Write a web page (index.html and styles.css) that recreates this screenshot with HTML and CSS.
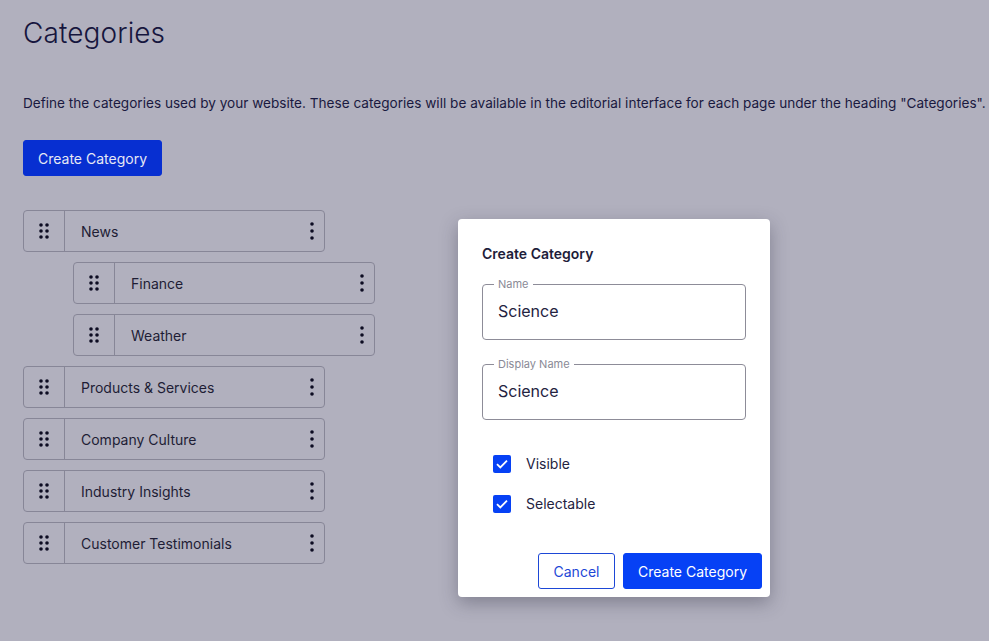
FILE: index.html
```html
<!DOCTYPE html>
<html lang="en">
<head>
<meta charset="utf-8">
<title>Categories</title>
<link rel="stylesheet" href="styles.css">
</head>
<body>
<main class="page">
  <h1 class="title">Categories</h1>
  <p class="intro">Define the categories used by your website. These categories will be available in the editorial interface for each page under the heading "Categories".</p>
  <button class="btn btn-primary btn-dim">Create Category</button>

  <ul class="tree">
    <li class="row"><span class="handle"><svg width="10" height="16" viewBox="0 0 10 16"><circle cx="2" cy="2" r="1.8"/><circle cx="8" cy="2" r="1.8"/><circle cx="2" cy="8" r="1.8"/><circle cx="8" cy="8" r="1.8"/><circle cx="2" cy="14" r="1.8"/><circle cx="8" cy="14" r="1.8"/></svg></span><span class="label">News</span><span class="more"><svg width="4" height="18" viewBox="0 0 4 18"><circle cx="2" cy="2" r="1.8"/><circle cx="2" cy="9" r="1.8"/><circle cx="2" cy="16" r="1.8"/></svg></span></li>
    <li class="row child"><span class="handle"><svg width="10" height="16" viewBox="0 0 10 16"><circle cx="2" cy="2" r="1.8"/><circle cx="8" cy="2" r="1.8"/><circle cx="2" cy="8" r="1.8"/><circle cx="8" cy="8" r="1.8"/><circle cx="2" cy="14" r="1.8"/><circle cx="8" cy="14" r="1.8"/></svg></span><span class="label">Finance</span><span class="more"><svg width="4" height="18" viewBox="0 0 4 18"><circle cx="2" cy="2" r="1.8"/><circle cx="2" cy="9" r="1.8"/><circle cx="2" cy="16" r="1.8"/></svg></span></li>
    <li class="row child"><span class="handle"><svg width="10" height="16" viewBox="0 0 10 16"><circle cx="2" cy="2" r="1.8"/><circle cx="8" cy="2" r="1.8"/><circle cx="2" cy="8" r="1.8"/><circle cx="8" cy="8" r="1.8"/><circle cx="2" cy="14" r="1.8"/><circle cx="8" cy="14" r="1.8"/></svg></span><span class="label">Weather</span><span class="more"><svg width="4" height="18" viewBox="0 0 4 18"><circle cx="2" cy="2" r="1.8"/><circle cx="2" cy="9" r="1.8"/><circle cx="2" cy="16" r="1.8"/></svg></span></li>
    <li class="row"><span class="handle"><svg width="10" height="16" viewBox="0 0 10 16"><circle cx="2" cy="2" r="1.8"/><circle cx="8" cy="2" r="1.8"/><circle cx="2" cy="8" r="1.8"/><circle cx="8" cy="8" r="1.8"/><circle cx="2" cy="14" r="1.8"/><circle cx="8" cy="14" r="1.8"/></svg></span><span class="label">Products &amp; Services</span><span class="more"><svg width="4" height="18" viewBox="0 0 4 18"><circle cx="2" cy="2" r="1.8"/><circle cx="2" cy="9" r="1.8"/><circle cx="2" cy="16" r="1.8"/></svg></span></li>
    <li class="row"><span class="handle"><svg width="10" height="16" viewBox="0 0 10 16"><circle cx="2" cy="2" r="1.8"/><circle cx="8" cy="2" r="1.8"/><circle cx="2" cy="8" r="1.8"/><circle cx="8" cy="8" r="1.8"/><circle cx="2" cy="14" r="1.8"/><circle cx="8" cy="14" r="1.8"/></svg></span><span class="label">Company Culture</span><span class="more"><svg width="4" height="18" viewBox="0 0 4 18"><circle cx="2" cy="2" r="1.8"/><circle cx="2" cy="9" r="1.8"/><circle cx="2" cy="16" r="1.8"/></svg></span></li>
    <li class="row"><span class="handle"><svg width="10" height="16" viewBox="0 0 10 16"><circle cx="2" cy="2" r="1.8"/><circle cx="8" cy="2" r="1.8"/><circle cx="2" cy="8" r="1.8"/><circle cx="8" cy="8" r="1.8"/><circle cx="2" cy="14" r="1.8"/><circle cx="8" cy="14" r="1.8"/></svg></span><span class="label">Industry Insights</span><span class="more"><svg width="4" height="18" viewBox="0 0 4 18"><circle cx="2" cy="2" r="1.8"/><circle cx="2" cy="9" r="1.8"/><circle cx="2" cy="16" r="1.8"/></svg></span></li>
    <li class="row"><span class="handle"><svg width="10" height="16" viewBox="0 0 10 16"><circle cx="2" cy="2" r="1.8"/><circle cx="8" cy="2" r="1.8"/><circle cx="2" cy="8" r="1.8"/><circle cx="8" cy="8" r="1.8"/><circle cx="2" cy="14" r="1.8"/><circle cx="8" cy="14" r="1.8"/></svg></span><span class="label">Customer Testimonials</span><span class="more"><svg width="4" height="18" viewBox="0 0 4 18"><circle cx="2" cy="2" r="1.8"/><circle cx="2" cy="9" r="1.8"/><circle cx="2" cy="16" r="1.8"/></svg></span></li>
  </ul>
</main>

<div class="dialog" role="dialog" aria-labelledby="dlg-title">
  <h2 class="dialog-title" id="dlg-title">Create Category</h2>
  <fieldset class="field">
    <legend>Name</legend>
    <span class="value">Science</span>
  </fieldset>
  <fieldset class="field">
    <legend>Display Name</legend>
    <span class="value">Science</span>
  </fieldset>
  <div class="checks">
    <label class="check"><span class="box"><svg width="12" height="10" viewBox="0 0 12 10"><path d="M1 5.2 4.3 8.4 11 1.6" fill="none" stroke="#fff" stroke-width="1.8"/></svg></span>Visible</label>
    <label class="check"><span class="box"><svg width="12" height="10" viewBox="0 0 12 10"><path d="M1 5.2 4.3 8.4 11 1.6" fill="none" stroke="#fff" stroke-width="1.8"/></svg></span>Selectable</label>
  </div>
  <div class="actions">
    <button class="btn btn-outline">Cancel</button>
    <button class="btn btn-primary">Create Category</button>
  </div>
</div>
</body>
</html>
```
FILE: styles.css
```css
* { box-sizing: border-box; }

html, body {
  margin: 0;
  height: 100%;
}

body {
  background: #b1b0be;
  color: #1a1940;
  font-family: Inter, "Noto Sans", sans-serif;
  overflow: hidden;
}

.page {
  padding: 12px 0 0 23px;
}

.title {
  margin: 0;
  font-size: 28px;
  font-weight: 300;
  line-height: 42px;
  color: #16153d;
  letter-spacing: 0.1px;
}

.intro {
  margin: 39px 0 0;
  font-size: 13.6px;
  line-height: 20px;
  color: #1a1940;
  white-space: nowrap;
}

.btn {
  font-family: inherit;
  font-size: 14px;
  height: 36px;
  border-radius: 3px;
  padding: 0 15px;
  cursor: pointer;
}

.btn-primary {
  background: #0641f5;
  border: 1px solid #0641f5;
  color: #fff;
}

.btn-dim {
  margin-top: 27px;
  width: 139px;
  padding: 0;
  background: #072fd1;
  border-color: #072fd1;
  color: #e6e8f4;
}

.btn-outline {
  background: #fff;
  border: 1px solid #1d47d6;
  color: #1d47d6;
}

.tree {
  list-style: none;
  margin: 34px 0 0;
  padding: 0;
  display: flex;
  flex-direction: column;
  gap: 10px;
}

.row {
  width: 302px;
  height: 42px;
  border: 1px solid #878697;
  border-radius: 4px;
  display: flex;
  align-items: center;
  font-size: 14px;
  color: #1e1d35;
}

.row.child {
  margin-left: 50px;
}

.handle {
  width: 41px;
  height: 100%;
  border-right: 1px solid #878697;
  display: flex;
  align-items: center;
  justify-content: center;
}

.handle svg, .more svg { fill: #0d0c22; }

.label {
  flex: 1;
  padding-left: 16px;
}

.more {
  width: 24px;
  display: flex;
  justify-content: center;
}

/* dialog over the dimmed page */
.dialog {
  position: absolute;
  left: 458px;
  top: 219px;
  width: 312px;
  height: 378px;
  background: #fff;
  border-radius: 4px;
  box-shadow: 0 6px 18px rgba(40, 40, 60, 0.35);
  padding: 24px 24px 8px;
  display: flex;
  flex-direction: column;
}

.dialog-title {
  margin: 0;
  font-size: 14px;
  font-weight: 600;
  line-height: 22px;
  color: #1e1d3a;
}

.field {
  margin: 0;
  border: 1px solid #8d8c98;
  border-radius: 4px;
  padding: 10px 15px 18px;
  min-width: 0;
}

.dialog-title + .field { margin-top: 12px; }
.field + .field { margin-top: 17px; }

.field legend {
  font-size: 11px;
  color: #8a8a96;
  padding: 0 4px;
  margin-left: -4px;
  line-height: 14px;
}

.value {
  display: block;
  font-size: 16px;
  line-height: 20px;
  color: #24233f;
}

.checks {
  margin-top: 35px;
  padding-left: 11px;
  display: flex;
  flex-direction: column;
  gap: 22px;
}

.check {
  display: flex;
  align-items: center;
  gap: 15px;
  font-size: 14px;
  line-height: 18px;
  color: #24233f;
}

.box {
  width: 18px;
  height: 18px;
  border-radius: 2px;
  background: #0641f5;
  display: flex;
  align-items: center;
  justify-content: center;
}

.actions {
  margin-top: auto;
  display: flex;
  justify-content: flex-end;
  gap: 8px;
  margin-right: -16px;
}

.actions .btn-outline { width: 77px; padding: 0; }
.actions .btn-primary { width: 139px; padding: 0; }
```
